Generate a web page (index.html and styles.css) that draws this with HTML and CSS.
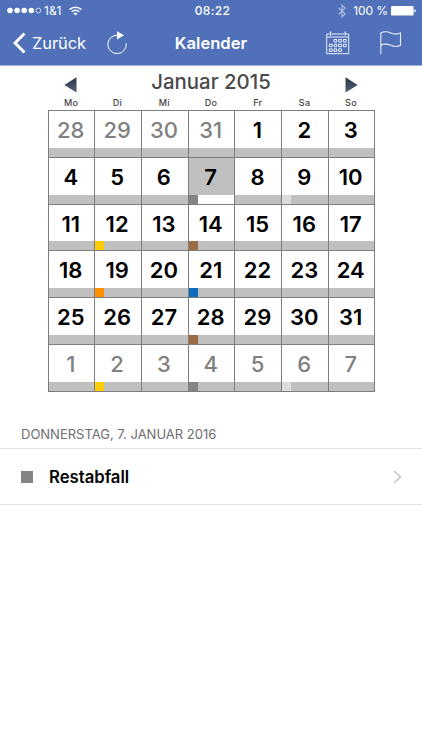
FILE: index.html
```html
<!DOCTYPE html>
<html lang="de">
<head>
<meta charset="UTF-8">
<meta name="viewport" content="width=device-width, initial-scale=1.0">
<title>Kalender</title>
<link rel="stylesheet" href="styles.css">
</head>
<body>
    <header class="top">
        <div class="status">
            <div class="status-left">
                <svg class="signal" width="35" height="7" viewBox="0 0 35 7">
                    <g fill="#fff">
                        <circle cx="3" cy="3.5" r="2.8"/>
                        <circle cx="10.1" cy="3.5" r="2.8"/>
                        <circle cx="17.2" cy="3.5" r="2.8"/>
                        <circle cx="24.3" cy="3.5" r="2.8"/>
                    </g>
                    <circle cx="31.4" cy="3.5" r="2.4" fill="none" stroke="#fff" stroke-width=".7"/>
                </svg>
                <span class="carrier">1&amp;1</span>
                <svg class="wifi" width="13" height="10" viewBox="0 0 13 10">
                    <g fill="none" stroke="#fff" stroke-width="1.5">
                        <path d="M.6 3.6a8.4 8.4 0 0 1 11.8 0"/>
                        <path d="M2.7 5.8a5.4 5.4 0 0 1 7.6 0"/>
                    </g>
                    <path d="M4.5 7.4a2.9 2.9 0 0 1 4 0l-2 2.1z" fill="#fff"/>
                </svg>
            </div>
            <div class="clock">08:22</div>
            <div class="status-right">
                <svg class="bluetooth" width="8" height="14" viewBox="0 0 8 14">
                    <path d="M.7 3.7l6.4 6.2L4 12.8V1.2l3.1 2.9L.7 10.3" fill="none" stroke="#a9b9e0" stroke-width="1.2"/>
                </svg>
                <span class="percent">100 %</span>
                <svg class="battery" width="25" height="10" viewBox="0 0 25 10">
                    <rect x="0" y="0" width="22.6" height="9.6" rx="1.2" fill="#fff"/>
                    <path d="M23.4 3.2q1.5.3 1.5 1.6t-1.5 1.6z" fill="#fff"/>
                </svg>
            </div>
        </div>
        <nav class="navbar">
            <div class="nav-left">
                <svg width="13" height="22" viewBox="0 0 13 22">
                    <path d="M11.500 1.500L2 11l9.500 9.500" fill="none" stroke="#fff" stroke-width="3"/>
                </svg>
                <span class="back">Zurück</span>
                <svg class="reload" width="22" height="25" viewBox="0 0 22 25">
                    <path d="M11 4.200a9.200 9.200 0 1 0 9.200 8.200" fill="none" stroke="#fff" stroke-width="1"/>
                    <path d="M11 .2l7 4L11 8.400z" fill="#fff"/>
                </svg>
            </div>
            <h1 class="title">Kalender</h1>
            <div class="nav-right">
                <svg class="cal-icon" width="24" height="24" viewBox="0 0 24 24">
                    <g fill="none" stroke="#e9eefa" stroke-width="1">
                        <path d="M3.500 3H.7v19.700h22V3h-2.500M5.500 3h12.600M.7 6h22"/>
                        <path d="M4.500 .5v4M19.200 .5v4" stroke-width="1.300"/>
                        <path d="M8 8.500h2.800v2.500H8zM12.700 8.500h2.800v2.500h-2.800zM17.400 8.500h2.800v2.500h-2.800z"/>
                        <path d="M3.300 13.200h2.800v2.500H3.300zM8 13.200h2.800v2.500H8zM12.700 13.200h2.800v2.500h-2.800zM17.400 13.200h2.800v2.500h-2.800z"/>
                        <path d="M3.300 17.900h2.800v2.500H3.300zM8 17.900h2.800v2.500H8zM12.700 17.900h2.800v2.500h-2.800z"/>
                    </g>
                </svg>
                <svg class="flag-icon" width="22" height="24" viewBox="0 0 22 24">
                    <path d="M.8 23.200V2c3.500-2 6.500-1.500 10 0s6.500 1.500 9.700 0v12.300c-3.200 1.700-6.200 1.500-9.700 0s-6.500-2-10 0" fill="none" stroke="#e9eefa" stroke-width="1.100"/>
                </svg>
            </div>
        </nav>
    </header>

    <main>
        <section class="calendar">
            <div class="month">
                <svg width="13" height="16" viewBox="0 0 13 16">
                    <defs>
                        <linearGradient id="arrow" x1="0" y1="0" x2="0" y2="1">
                            <stop offset="0" stop-color="#2c3744"/>
                            <stop offset="1" stop-color="#50627a"/>
                        </linearGradient>
                    </defs>
                    <path d="M12.500 .3v15.200L.3 7.900z" fill="url(#arrow)"/>
                </svg>
                <h2 class="month-name">Januar 2015</h2>
                <svg width="13" height="16" viewBox="0 0 13 16">
                    <path d="M.5 .3v15.200l12.200-7.600z" fill="url(#arrow)"/>
                </svg>
            </div>
            <div class="weekdays">
                <span>Mo</span><span>Di</span><span>Mi</span><span>Do</span><span>Fr</span><span>Sa</span><span>So</span>
            </div>
            <div class="days">
                <div class="day other"><b>28</b><i></i></div>
                <div class="day other"><b>29</b><i></i></div>
                <div class="day other"><b>30</b><i></i></div>
                <div class="day other"><b>31</b><i></i></div>
                <div class="day"><b>1</b><i></i></div>
                <div class="day"><b>2</b><i></i></div>
                <div class="day"><b>3</b><i></i></div>

                <div class="day"><b>4</b><i></i></div>
                <div class="day"><b>5</b><i></i></div>
                <div class="day"><b>6</b><i></i></div>
                <div class="day selected"><b>7</b><i class="rest"></i></div>
                <div class="day"><b>8</b><i></i></div>
                <div class="day"><b>9</b><i class="light"></i></div>
                <div class="day"><b>10</b><i></i></div>

                <div class="day"><b>11</b><i></i></div>
                <div class="day"><b>12</b><i class="yellow"></i></div>
                <div class="day"><b>13</b><i></i></div>
                <div class="day"><b>14</b><i class="brown"></i></div>
                <div class="day"><b>15</b><i></i></div>
                <div class="day"><b>16</b><i></i></div>
                <div class="day"><b>17</b><i></i></div>

                <div class="day"><b>18</b><i></i></div>
                <div class="day"><b>19</b><i class="orange"></i></div>
                <div class="day"><b>20</b><i></i></div>
                <div class="day"><b>21</b><i class="blue"></i></div>
                <div class="day"><b>22</b><i></i></div>
                <div class="day"><b>23</b><i></i></div>
                <div class="day"><b>24</b><i></i></div>

                <div class="day"><b>25</b><i></i></div>
                <div class="day"><b>26</b><i></i></div>
                <div class="day"><b>27</b><i></i></div>
                <div class="day"><b>28</b><i class="brown"></i></div>
                <div class="day"><b>29</b><i></i></div>
                <div class="day"><b>30</b><i></i></div>
                <div class="day"><b>31</b><i></i></div>

                <div class="day other"><b>1</b><i></i></div>
                <div class="day other"><b>2</b><i class="yellow"></i></div>
                <div class="day other"><b>3</b><i></i></div>
                <div class="day other"><b>4</b><i class="rest"></i></div>
                <div class="day other"><b>5</b><i></i></div>
                <div class="day other"><b>6</b><i class="light"></i></div>
                <div class="day other"><b>7</b><i></i></div>
            </div>
        </section>

        <section class="events">
            <h3 class="events-date">DONNERSTAG, 7. JANUAR 2016</h3>
            <div class="event">
                <span class="swatch"></span>
                <span class="event-name">Restabfall</span>
                <svg width="9" height="14" viewBox="0 0 9 14">
                    <path d="M1 1l6.500 6L1 13" fill="none" stroke="#c4c4c8" stroke-width="1.500"/>
                </svg>
            </div>
        </section>
    </main>
</body>
</html>
```

FILE: styles.css
```css
* {
    box-sizing: border-box;
}

body {
    margin: 0;
    background: #fff;
    font-family: Inter, Roboto, sans-serif;
    color: #000;
}

svg {
    display: block;
    flex: none;
}

/* Header */
.top {
    height: 66px;
    background: #5071b9;
    border-bottom: 1px solid #a3b2d5;
    color: #fff;
}

.status {
    height: 21px;
    display: grid;
    grid-template-columns: 1fr auto 1fr;
    align-items: center;
    padding: 0 6px 0 7px;
    font-size: 12px;
}

.status-left, .status-right {
    display: flex;
    align-items: center;
}

.status-right {
    justify-content: flex-end;
}

.carrier {
    margin: 0 7px 0 2px;
}

.clock {
    padding-left: 2px;
    font-weight: 500;
    letter-spacing: 0.4px;
}

.percent {
    margin: 0 3px 0 7px;
    letter-spacing: -0.1px;
}

.navbar {
    height: 44px;
    display: grid;
    grid-template-columns: 1fr auto 1fr;
    align-items: center;
    padding: 0 21px;
}

.nav-left, .nav-right {
    display: flex;
    align-items: center;
}

.nav-left {
    margin-left: -8px;
}

.nav-right {
    justify-content: flex-end;
    gap: 30px;
    margin: -1px -1px 0 0;
}

.back {
    margin: 0 20px 0 6px;
    font-size: 16.5px;
    letter-spacing: -0.1px;
}

.title {
    margin: 0;
    font-size: 16.6px;
    font-weight: 600;
}

/* Calendar */
.calendar {
    width: 327px;
    margin-left: 48px;
}

.month {
    height: 31px;
    display: flex;
    align-items: center;
    justify-content: space-between;
    padding: 7px 17px 0 16px;
}

.month-name {
    margin: -7px 0 0;
    font-size: 20.4px;
    font-weight: 500;
    color: #4a4a4a;
}

.weekdays, .days {
    display: grid;
    grid-template-columns: 45px repeat(5, 45.8px) 45px;
    column-gap: 1px;
    padding: 0 1px;
}

.weekdays {
    height: 13px;
    font-size: 9px;
    font-weight: 500;
    line-height: 12px;
    letter-spacing: 0.3px;
    text-align: center;
    color: #444;
}

.weekdays span {
    padding-right: 1px;
}

.days {
    height: 282px;
    grid-template-rows: repeat(6, minmax(0, 1fr));
    gap: 1px;
    padding: 1px;
    background: #7d7d7d;
}

.day {
    display: flex;
    flex-direction: column;
    background: #fff;
}

.day b {
    flex: 1;
    min-height: 0;
    padding-right: 1.6px;
    font-size: 22px;
    font-weight: 600;
    line-height: 38px;
    text-align: center;
}

.day i {
    flex: none;
    height: 9px;
    background: #c0c0c0;
}

.day i::before {
    content: "";
    display: block;
    width: 9px;
    height: 9px;
}

.other b {
    color: #808080;
    font-weight: 550;
}

.selected {
    background: #c0c0c0;
}

.selected i {
    background: #fff;
}

.day .rest::before { background: #848484; }
.day .light::before { background: #dcdcdc; }
.day .yellow::before { background: #ffcc00; }
.day .brown::before { background: #996a43; }
.day .orange::before { background: #ff9000; }
.day .blue::before { background: #0d6ebd; }

/* Events of the selected day */
.events-date {
    height: 56px;
    margin: 0;
    padding: 33px 21px 0;
    font-size: 13px;
    font-weight: 400;
    line-height: 18px;
    color: #6d6d72;
}

.event {
    height: 57px;
    display: flex;
    align-items: center;
    padding: 0 20px 0 21px;
    border-top: 1px solid #e4e4e6;
    border-bottom: 1px solid #e4e4e6;
}

.swatch {
    width: 12px;
    height: 12px;
    background: #848484;
}

.event-name {
    flex: 1;
    margin-left: 16px;
    font-size: 16.7px;
    font-weight: 600;
}
```
